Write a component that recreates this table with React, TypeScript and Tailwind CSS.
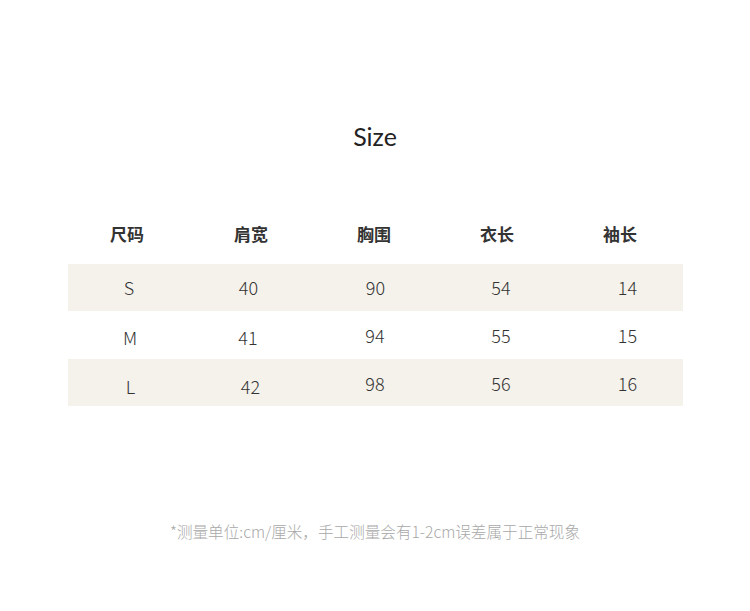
import React from 'react';

const headers = ['尺码', '肩宽', '胸围', '衣长', '袖长'];
// cell classes are written out per row so Tailwind sees them; small nudges follow the source chart
const rows = [
    {
        cells: ['S', '40', '90', '54', '14'],
        band: true,
        h: 'h-[47px]',
        nudge: ['', 'pr-[7px]', 'pl-[1px]', 'pl-[6px]', 'pl-[13px]'],
    },
    {
        cells: ['M', '41', '94', '55', '15'],
        band: false,
        h: 'h-[48px]',
        nudge: ['pl-[2px] pt-[5px]', 'pr-[8px] pt-[4px]', 'pt-[1px]', 'pl-[6px] pt-[1px]', 'pl-[13px] pt-[1px]'],
    },
    {
        cells: ['L', '42', '98', '56', '16'],
        band: true,
        h: 'h-[47px]',
        nudge: ['pl-[3px] pt-[8px]', 'pr-[3px] pt-[7px]', 'pt-[1px]', 'pl-[6px] pt-[1px]', 'pl-[13px] pt-[1px]'],
    },
];

const cjk = { fontFamily: '"Noto Sans CJK SC", "Noto Sans", sans-serif' };

const App = () => {
    return (
        <div className="flex h-[611px] w-[750px] flex-col items-center bg-white" style={cjk}>
            <h1 className="pt-[120px] text-[25px] leading-[32px] text-[#222]" style={{ fontFamily: 'Lato, "Noto Sans", sans-serif' }}>
                Size
            </h1>
            <div className="mt-[67px] grid h-[30px] w-[615px] grid-cols-5 items-center text-[17px] font-bold text-[#333]">
                {headers.map((h, i) => (
                    <div key={h} className={i === 0 ? 'pr-[4px] text-center' : 'pr-[2px] text-center'}>
                        {h}
                    </div>
                ))}
            </div>
            <div className="mt-[15px] w-[615px]">
                {rows.map((row) => (
                    <div
                        key={row.cells[0]}
                        className={`grid grid-cols-5 items-center text-[18px] font-light text-[#333] ${row.h} ${row.band ? 'bg-[#f5f2eb]' : ''}`}
                    >
                        {row.cells.map((c, i) => (
                            <div key={i} className={`text-center ${row.nudge[i]}`}>
                                {c}
                            </div>
                        ))}
                    </div>
                ))}
            </div>
            <p className="mt-[115px] text-[15.6px] leading-[20px] text-[#a8a8a8] font-light">
                *测量单位:cm/厘米，手工测量会有1-2cm误差属于正常现象
            </p>
        </div>
    );
};

export default App;
